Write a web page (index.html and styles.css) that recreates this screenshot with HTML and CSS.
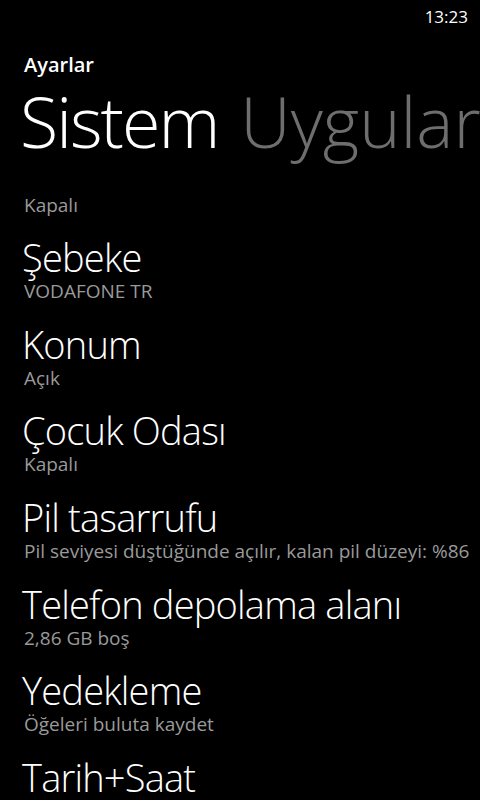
FILE: index.html
```html
<!DOCTYPE html>
<html lang="tr">
<head>
<meta charset="utf-8">
<link rel="stylesheet" href="styles.css">
</head>
<body>
<div class="phone">
  <div class="status"><span class="clock">13:23</span></div>
  <div class="apptitle">Ayarlar</div>
  <div class="pivot">
    <span class="pv active">Sistem</span>
    <span class="pv">Uygular</span>
  </div>
  <div class="list">
    <div class="item clipped"><div class="sub">Kapalı</div></div>
    <div class="item"><div class="title">Şebeke</div><div class="sub">VODAFONE TR</div></div>
    <div class="item"><div class="title">Konum</div><div class="sub">Açık</div></div>
    <div class="item"><div class="title">Çocuk Odası</div><div class="sub">Kapalı</div></div>
    <div class="item"><div class="title">Pil tasarrufu</div><div class="sub">Pil seviyesi düştüğünde açılır, kalan pil düzeyi: %86</div></div>
    <div class="item"><div class="title">Telefon depolama alanı</div><div class="sub">2,86 GB boş</div></div>
    <div class="item"><div class="title">Yedekleme</div><div class="sub">Öğeleri buluta kaydet</div></div>
    <div class="item"><div class="title">Tarih+Saat</div></div>
  </div>
</div>
</body>
</html>
```
FILE: styles.css
```css
html, body {
  margin: 0;
  padding: 0;
  background: #000;
}
.phone {
  width: 480px;
  height: 800px;
  overflow: hidden;
  background: #000;
  color: #fff;
  font-family: "Open Sans", "Noto Sans", sans-serif;
}
.status {
  height: 32px;
  display: flex;
  justify-content: flex-end;
  align-items: center;
  padding-right: 12px;
}
.clock {
  font-size: 17px;
  line-height: 1;
}
.apptitle {
  padding-left: 24px;
  font-size: 20px;
  font-weight: 600;
  line-height: 26px;
  margin-top: 20px;
}
.pivot {
  display: flex;
  gap: 22px;
  padding-left: 20px;
  white-space: nowrap;
  font-size: 70px;
  font-weight: 300;
  line-height: 84px;
  margin-top: 1px;
}
.pv {
  color: #6e6e6e;
  flex: none;
}
.pv.active {
  color: #fff;
  letter-spacing: -2px;
}
.list {
  padding-left: 24px;
  margin-top: 30px;
}
.item {
  height: 86.67px;
  display: flex;
  flex-direction: column;
}
.item.clipped {
  height: 42px;
}
.title {
  font-size: 38px;
  font-weight: 300;
  line-height: 44px;
  letter-spacing: -0.8px;
  margin-left: -2px;
  white-space: nowrap;
}
.sub {
  font-size: 19px;
  line-height: 24px;
  color: #9a9a9a;
  white-space: nowrap;
}
```
